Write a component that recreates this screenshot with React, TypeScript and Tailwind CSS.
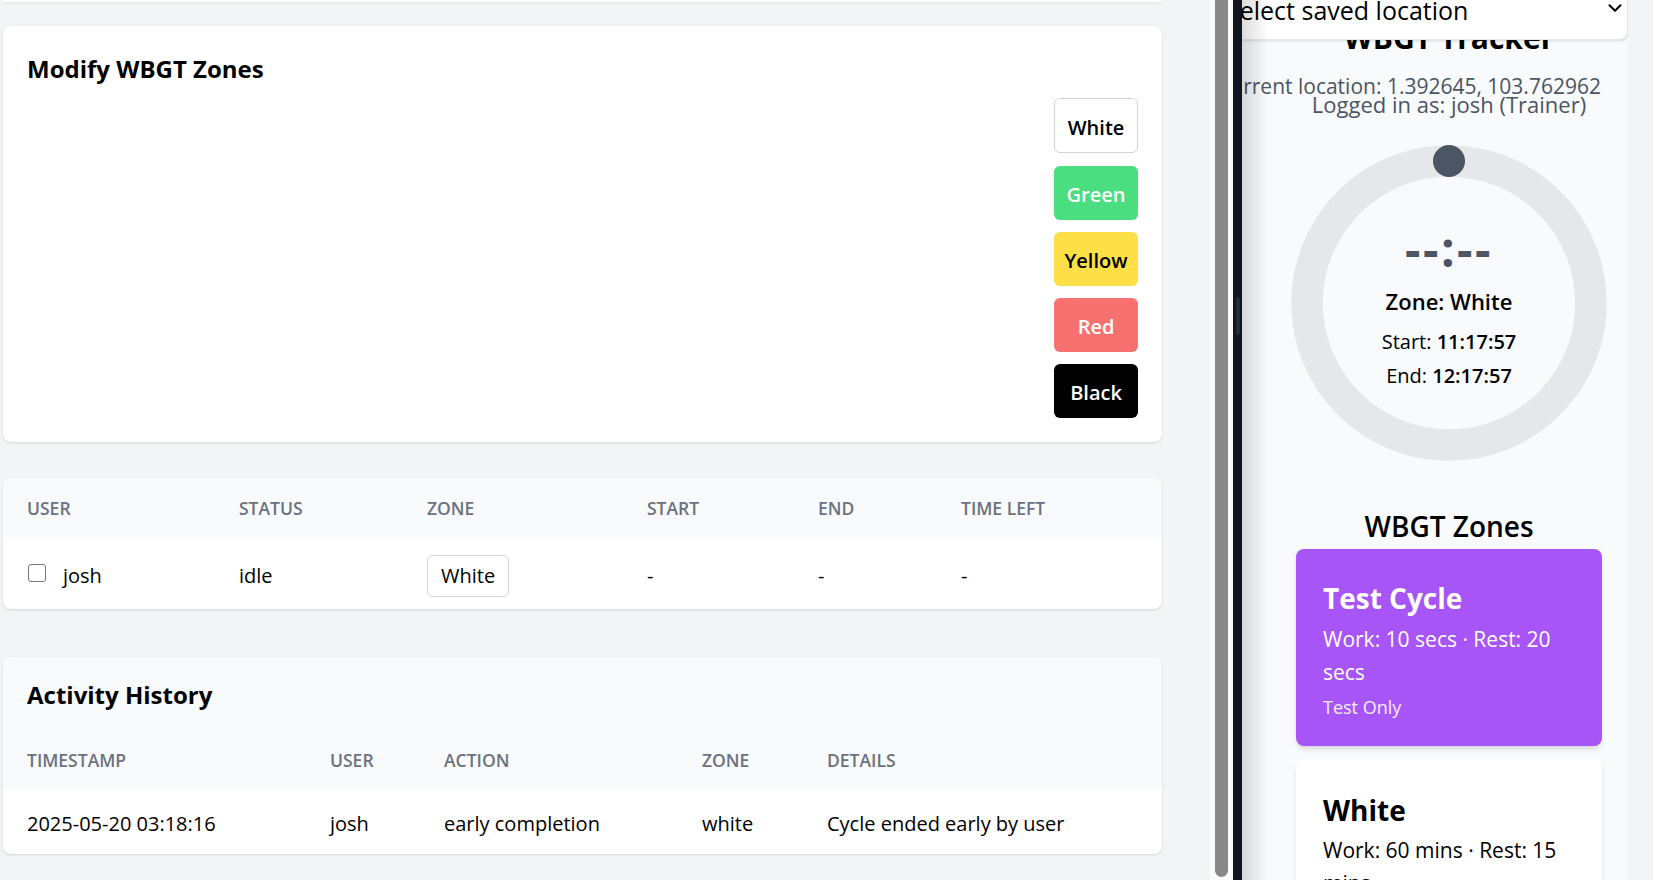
import React from "react";
import { ChevronDown } from "lucide-react";

const zoneButtons = [
  { label: "White", cls: "bg-white text-black border border-[#d1d5db] h-[55px] mb-px" },
  { label: "Green", cls: "bg-[#4ade80] text-white h-[54px]" },
  { label: "Yellow", cls: "bg-[#fde047] text-black h-[54px]" },
  { label: "Red", cls: "bg-[#f87171] text-white h-[54px]" },
  { label: "Black", cls: "bg-black text-white h-[54px]" },
];

const thCls = "px-6 pt-[2px] text-left align-middle text-[17.5px] font-semibold uppercase text-[#6b7280]";
const tdCls = "px-6 text-left align-middle text-[20px] leading-7 text-black";

function ModifyCard() {
  return (
    <section className="mt-[24px] w-[1159px] shrink-0 rounded-lg bg-white px-6 pb-6 pt-[27px] shadow-sm">
      <h2 className="text-[24px] font-bold leading-8 text-black">Modify WBGT Zones</h2>
      <div className="mt-[13px] flex justify-end">
        <div className="flex flex-col gap-3">
          {zoneButtons.map((b) => (
            <button
              key={b.label}
              className={`w-[84px] rounded-md pt-[4px] text-center text-[20px] font-semibold leading-7 ${b.cls}`}
            >
              {b.label}
            </button>
          ))}
        </div>
      </div>
    </section>
  );
}

function UsersTable() {
  const widths = [212, 188, 220, 171, 143, 225];
  return (
    <section className="mt-[36px] w-[1159px] shrink-0 overflow-hidden rounded-lg bg-white shadow-sm">
      <table className="w-full table-fixed border-collapse">
        <colgroup>
          {widths.map((w, i) => (
            <col key={i} style={{ width: w }} />
          ))}
        </colgroup>
        <thead className="bg-[#f9fafb]">
          <tr className="h-[59px]">
            <th className={thCls}>User</th>
            <th className={thCls}>Status</th>
            <th className={thCls}>Zone</th>
            <th className={thCls}>Start</th>
            <th className={thCls}>End</th>
            <th className={thCls}>Time Left</th>
          </tr>
        </thead>
        <tbody>
          <tr className="h-[72px]">
            <td className={`${tdCls} pt-[6px]`}>
              <div className="flex items-center gap-[17px] pl-px">
                <input
                  type="checkbox"
                  className="-mt-[6px] h-[18px] w-[18px] appearance-none rounded-[3px] border-[1.5px] border-[#767676] bg-white"
                />
                <span>josh</span>
              </div>
            </td>
            <td className={`${tdCls} pt-[6px]`}>idle</td>
            <td className={`${tdCls} pt-[5px]`}>
              <button className="rounded-md border border-[#d1d5db] bg-white px-[13px] py-[6px] text-[20px] leading-7 text-black">
                White
              </button>
            </td>
            <td className={`${tdCls} pt-[6px]`}>-</td>
            <td className={`${tdCls} pt-[6px]`}>-</td>
            <td className={`${tdCls} pt-[6px]`}>-</td>
          </tr>
        </tbody>
      </table>
    </section>
  );
}

function ActivityCard() {
  const widths = [303, 114, 258, 125, 359];
  const td = `${tdCls} pt-[4px]`;
  return (
    <section className="mt-[48px] w-[1159px] shrink-0 overflow-hidden rounded-lg bg-white shadow-sm">
      <div className="bg-[#f9fafb] px-6 pb-[19px] pt-[22px]">
        <h2 className="text-[24px] font-bold leading-8 text-black">Activity History</h2>
      </div>
      <table className="w-full table-fixed border-collapse">
        <colgroup>
          {widths.map((w, i) => (
            <col key={i} style={{ width: w }} />
          ))}
        </colgroup>
        <thead className="bg-[#f9fafb]">
          <tr className="h-[59px]">
            <th className={thCls}>Timestamp</th>
            <th className={thCls}>User</th>
            <th className={thCls}>Action</th>
            <th className={thCls}>Zone</th>
            <th className={thCls}>Details</th>
          </tr>
        </thead>
        <tbody>
          <tr className="h-[65px]">
            <td className={td}>2025-05-20 03:18:16</td>
            <td className={td}>josh</td>
            <td className={td}>early completion</td>
            <td className={td}>white</td>
            <td className={td}>Cycle ended early by user</td>
          </tr>
        </tbody>
      </table>
    </section>
  );
}

function Panel() {
  return (
    <aside className="relative h-[880px] w-[386px] shrink-0 overflow-hidden bg-[#f8fafc]">
      <div className="ml-[27px] flex w-[360px] flex-col items-center">
        <div className="relative flex w-full flex-col items-center">
          <h1 className="mt-[20px] whitespace-nowrap text-[30px] font-bold leading-[36px] text-black">
            WBGT Tracker
          </h1>
          <div className="absolute left-[-55px] right-[1px] top-[-21px] flex h-[61px] items-center justify-between rounded-lg border border-[#e5e7eb] bg-white pl-[11px] pr-[1px] shadow-sm">
            <span className="whitespace-nowrap text-[25px] leading-[30px] text-black">Select saved location</span>
            <ChevronDown size={22} strokeWidth={2.2} className="mb-1 text-black" />
          </div>
        </div>
        <p className="mr-[80px] mt-[18px] whitespace-nowrap text-[21px] leading-6 text-[#4b5563]">
          Current location: 1.392645, 103.762962
        </p>
        <p className="mt-[-6px] whitespace-nowrap text-[22px] leading-6 text-[#4b5563]">
          Logged in as: josh (Trainer)
        </p>
        <div className="relative mt-[27px] h-[320px] w-[320px] shrink-0">
          <svg width="320" height="320" viewBox="0 0 320 320">
            <circle cx="160" cy="160" r="142" fill="none" stroke="#e5e7eb" strokeWidth="31.5" />
            <circle cx="160" cy="18" r="16" fill="#4b5563" />
          </svg>
          <div className="absolute inset-0 flex flex-col items-center pt-[82px]">
            <div className="text-[48px] font-bold leading-[48px] tracking-[2.5px] text-[#4b5563]">--:--</div>
            <div className="mt-[14px] text-[22px] font-semibold leading-7 text-black">Zone: White</div>
            <div className="mt-[11px] text-[20px] leading-8 text-black">
              Start: <span className="font-semibold">11:17:57</span>
            </div>
            <div className="mt-[2px] text-[20px] leading-8 text-black">
              End: <span className="font-semibold">12:17:57</span>
            </div>
          </div>
        </div>
        <h2 className="mt-[45px] text-[28px] font-semibold leading-9 text-black">WBGT Zones</h2>
        <div className="mt-[5px] w-[306px] rounded-lg bg-[#a855f7] px-[27px] pb-[27px] pt-[31px] text-white shadow-md">
          <h3 className="text-[28px] font-bold leading-9">Test Cycle</h3>
          <p className="mt-[7px] text-[21px] leading-[33px]">Work: 10 secs · Rest: 20 secs</p>
          <p className="mt-[6px] text-[18px] leading-6 text-white/90">Test Only</p>
        </div>
        <div className="mt-[13px] w-[306px] rounded-lg bg-white px-[27px] pb-[27px] pt-[33px] text-black shadow-md">
          <h3 className="text-[28px] font-bold leading-9">White</h3>
          <p className="mt-[6px] text-[21px] leading-[33px]">Work: 60 mins · Rest: 15 mins</p>
          <p className="mt-[6px] text-[18px] leading-6 text-[#4b5563]">Low heat stress</p>
        </div>
      </div>
      <div className="pointer-events-none absolute bottom-0 left-0 top-0 w-[26px] bg-[linear-gradient(to_right,rgba(0,0,0,0.14),rgba(0,0,0,0))]" />
    </aside>
  );
}

export default function App() {
  return (
    <div className="flex h-[880px] w-[1653px] overflow-hidden bg-[#f3f4f6] font-['Open_Sans',sans-serif]">
      <main className="flex h-[880px] w-[1210px] shrink-0 flex-col overflow-hidden pl-[3px]">
        <div className="h-[2px] w-[1159px] shrink-0 rounded-b-lg bg-white shadow-sm" />
        <ModifyCard />
        <UsersTable />
        <ActivityCard />
      </main>
      <div className="h-[880px] w-[23px] shrink-0 bg-[#fbfbfb]">
        <div className="ml-[5px] h-[877px] w-[13px] rounded-b-full bg-[#888888]" />
      </div>
      <div className="h-[880px] w-[9px] shrink-0 bg-[#0f141f]">
        <div className="ml-[3px] mt-[297px] h-[38px] w-[4px] rounded-full bg-[#232a39]" />
      </div>
      <Panel />
      <div className="h-[880px] flex-1 bg-[#f3f4f6]" />
    </div>
  );
}
